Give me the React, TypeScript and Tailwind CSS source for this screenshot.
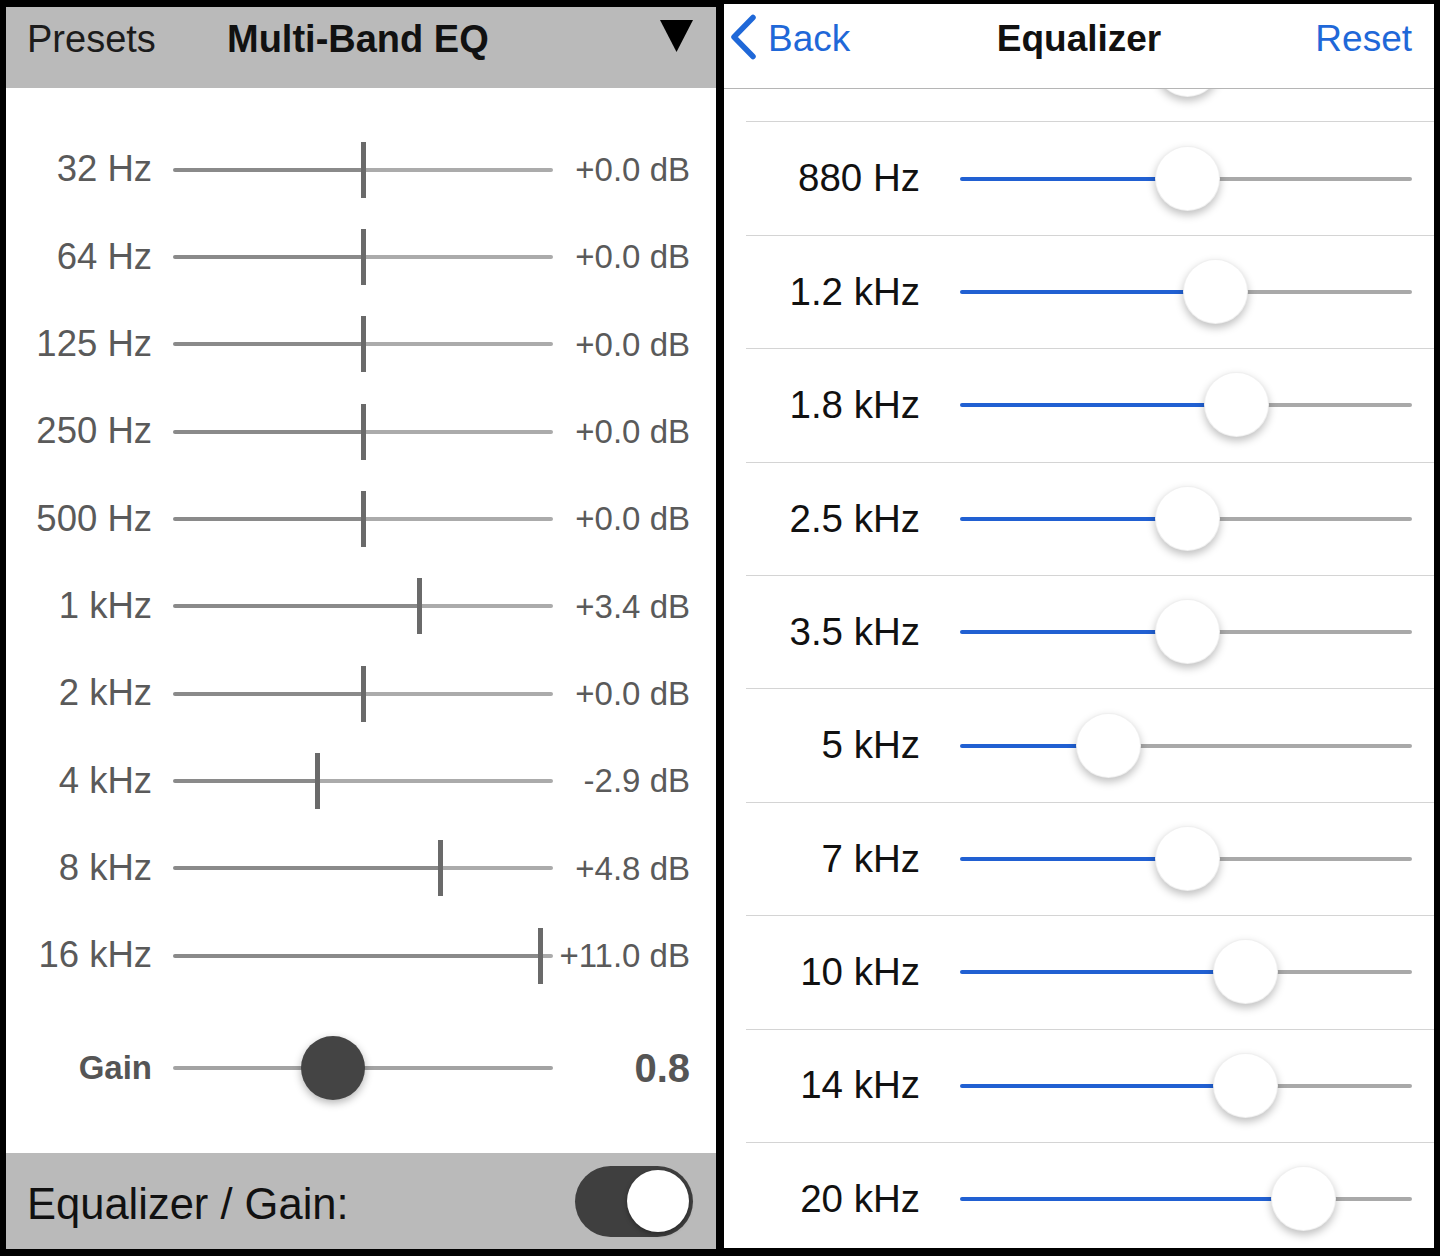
import React from "react";

const leftBands: [string, string, number][] = [
  ["32 Hz", "+0.0 dB", 363],
  ["64 Hz", "+0.0 dB", 363],
  ["125 Hz", "+0.0 dB", 363],
  ["250 Hz", "+0.0 dB", 363],
  ["500 Hz", "+0.0 dB", 363],
  ["1 kHz", "+3.4 dB", 419],
  ["2 kHz", "+0.0 dB", 363],
  ["4 kHz", "-2.9 dB", 317],
  ["8 kHz", "+4.8 dB", 440],
  ["16 kHz", "+11.0 dB", 540],
];

const rightBands: [string, number][] = [
  ["", 1187],
  ["880 Hz", 1187],
  ["1.2 kHz", 1215],
  ["1.8 kHz", 1236],
  ["2.5 kHz", 1187],
  ["3.5 kHz", 1187],
  ["5 kHz", 1108],
  ["7 kHz", 1187],
  ["10 kHz", 1245],
  ["14 kHz", 1245],
  ["20 kHz", 1303],
];

function LeftRow({ label, value, cx }: { label: string; value: string; cx: number }) {
  const pos = cx - 173;
  return (
    <div className="h-[87.33px] flex items-center shrink-0">
      <div className="w-[146px] text-right text-[36.5px] leading-none text-[#5a5a5a]">{label}</div>
      <div className="ml-[21px] w-[380px] h-[56px] relative flex items-center">
        <div className="h-[4px] bg-[#8a8a8a] rounded-l-full" style={{ width: pos }} />
        <div className="h-[4px] flex-1 bg-[#ababab] rounded-r-full" />
        <div
          className="absolute top-0 w-[5px] h-[56px] bg-[#6a6a6a]"
          style={{ left: pos - 2.5 }}
        />
      </div>
      <div className="flex-1 text-right pr-[26px] text-[33px] leading-none text-[#5a5a5a]">{value}</div>
    </div>
  );
}

function LeftPanel() {
  return (
    <div className="mt-[7px] w-[710px] h-[1242px] bg-white flex flex-col shrink-0">
      <div className="h-[81px] bg-[#bababa] flex items-start pt-[13px] shrink-0">
        <span className="ml-[21px] w-[200px] text-[38px] leading-[38px] text-[#1c1c1c]">Presets</span>
        <span className="text-[38px] leading-[38px] font-bold text-[#111]">Multi-Band EQ</span>
        <svg className="ml-auto mr-[23px]" width="33" height="32" viewBox="0 0 33 32">
          <polygon points="0,0 33,0 16.5,32" fill="#000" />
        </svg>
      </div>
      <div className="pt-[38px] flex flex-col">
        {leftBands.map(([l, v, cx]) => (
          <LeftRow key={l} label={l} value={v} cx={cx} />
        ))}
        <div className="mt-[25px] h-[87px] flex items-center shrink-0">
          <div className="w-[146px] text-right text-[33px] leading-none font-bold text-[#555]">Gain</div>
          <div className="ml-[21px] w-[380px] h-[66px] relative flex items-center">
            <div className="h-[4px] w-full bg-[#a3a3a3] rounded-full" />
            <div className="absolute top-[1px] left-[128px] w-[64px] h-[64px] rounded-full bg-[#444] shadow-[0_3px_8px_rgba(0,0,0,0.3)]" />
          </div>
          <div className="flex-1 text-right pr-[26px] text-[40px] leading-none font-bold text-[#555]">0.8</div>
        </div>
      </div>
      <div className="flex-1" />
      <div className="h-[96px] shrink-0 bg-[#bababa] flex items-center">
        <span className="ml-[21px] text-[43.5px] leading-none text-[#111] mt-[8px]">Equalizer / Gain:</span>
        <div className="ml-auto mr-[23px] w-[118px] h-[71px] rounded-full bg-[#3f3f3f] flex items-center justify-end pr-[4px]">
          <div className="w-[62px] h-[62px] rounded-full bg-white shadow-[0_2px_5px_rgba(0,0,0,0.35)]" />
        </div>
      </div>
    </div>
  );
}

function RightRow({ label, cx }: { label: string; cx: number }) {
  const pos = cx - 960;
  return (
    <div className="h-[113.4px] shrink-0 ml-[22px] border-b border-[#d4d4d4] flex items-center">
      <div className="w-[174px] text-right text-[38.5px] leading-none text-[#111]">{label}</div>
      <div className="ml-[40px] w-[452px] h-[66px] relative flex items-center">
        <div className="h-[4px] bg-[#2160d2] rounded-l-full" style={{ width: pos }} />
        <div className="h-[4px] flex-1 bg-[#a9a9a9] rounded-r-full" />
        <div
          className="absolute top-0 w-[65px] h-[65px] rounded-full bg-white border border-[rgba(0,0,0,0.06)] shadow-[0_4px_9px_rgba(0,0,0,0.25)]"
          style={{ left: pos - 32.5 }}
        />
      </div>
    </div>
  );
}

function RightPanel() {
  return (
    <div className="mt-[4px] w-[710px] h-[1244px] bg-white flex flex-col overflow-hidden shrink-0">
      <div className="h-[85px] shrink-0 border-b border-[#b5b5b5] flex items-start bg-white relative z-10">
        <div className="flex-1 basis-0 flex items-start">
          <svg className="ml-[6px] mt-[10px]" width="27" height="46" viewBox="0 0 27 46">
            <polyline points="23,3.5 4,23 23,42.5" fill="none" stroke="#1f68d8" strokeWidth="5.5" strokeLinecap="round" strokeLinejoin="round" />
          </svg>
          <span className="ml-[11px] mt-[16px] text-[37px] leading-[37px] text-[#1f68d8]">Back</span>
        </div>
        <span className="mt-[16px] text-[37px] leading-[37px] font-bold text-[#111]">Equalizer</span>
        <div className="flex-1 basis-0 flex justify-end">
          <span className="mr-[22px] mt-[16px] text-[37px] leading-[37px] text-[#1f68d8]">Reset</span>
        </div>
      </div>
      <div className="flex-1 overflow-hidden">
        <div className="-mt-[80px] flex flex-col">
          {rightBands.map(([l, cx], i) => (
            <RightRow key={i} label={l} cx={cx} />
          ))}
        </div>
      </div>
    </div>
  );
}

export default function App() {
  return (
    <div className="w-[1440px] h-[1256px] bg-black flex items-start pl-[6px] gap-[8px] overflow-hidden font-['Liberation_Sans',Arial,sans-serif]">
      <LeftPanel />
      <RightPanel />
    </div>
  );
}
